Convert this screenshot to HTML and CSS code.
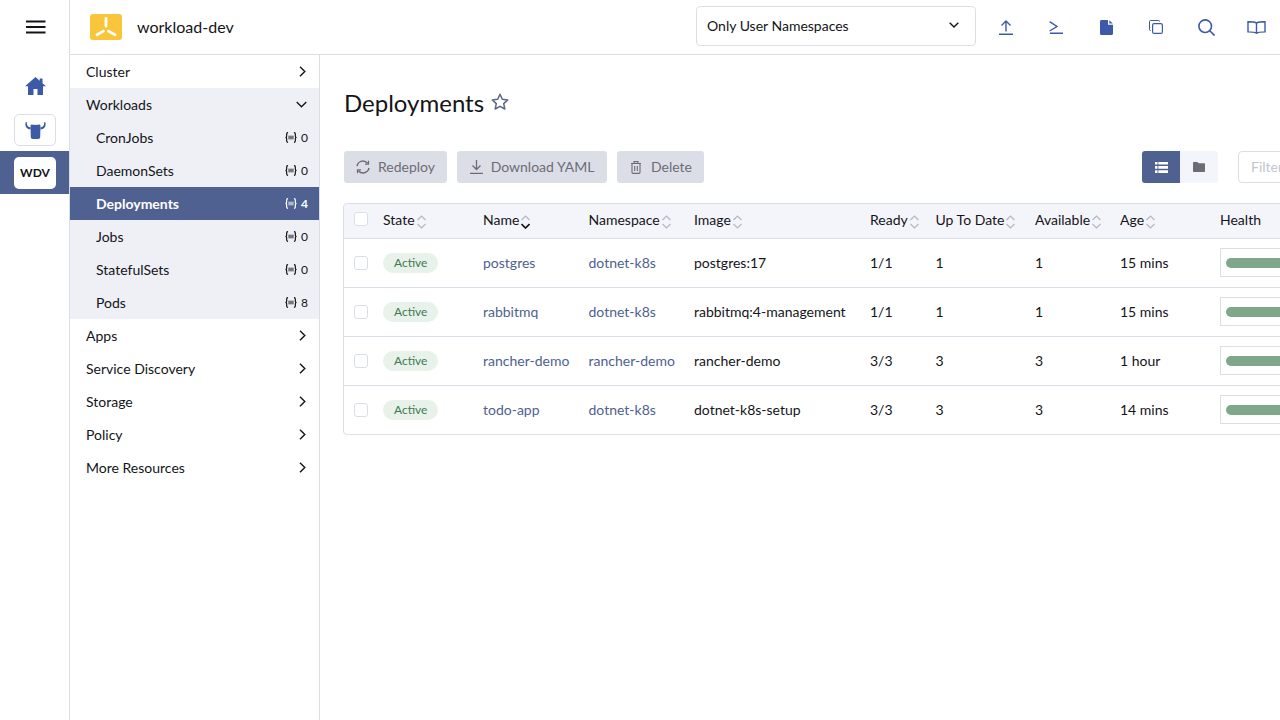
FILE: index.html
```html
<!DOCTYPE html>
<html lang="en">
<head>
  <meta charset="UTF-8">
  <title>Deployments</title>
  <link rel="stylesheet" href="styles.css">
</head>
<body>
  <svg class="sprite" width="0" height="0">
    <symbol id="count-icon" viewBox="0 0 11 10">
      <path d="M2.800.5C1.700.5 1.500 1 1.500 2v1.800C1.500 4.500 1.100 5 .4 5c.7 0 1.100.5 1.100 1.200V8c0 1 .2 1.500 1.300 1.500M8.200.5c1.100 0 1.300.5 1.300 1.500v1.800c0 .7.400 1.200 1.100 1.200-.7 0-1.100.5-1.100 1.200V8c0 1-.2 1.500-1.300 1.500" fill="none" stroke="currentColor" stroke-width="1.100"/>
      <rect x="3" y="3.300" width="5" height="3.400" fill="currentColor" fill-opacity=".55"/>
    </symbol>
    <symbol id="chev-right" viewBox="0 0 7 11">
      <path d="m1 .7 4.800 4.800L1 10.300" stroke="#141419" stroke-width="1.400" fill="none"/>
    </symbol>
  </svg>

  <div class="app">
    <aside class="rail">
      <div class="rail-menu">
        <svg width="20" height="14" viewBox="0 0 20 14"><path d="M0 1.500h19.500M0 7h19.500M0 12.500h19.500" stroke="#141419" stroke-width="2"/></svg>
      </div>
      <div class="rail-home">
        <svg width="21" height="18" viewBox="0 0 21 18"><path d="M10.500 0 0 9.300h3V18h5.500v-6h4v6H18V9.300h3L17.500 6.200V1.500h-2.800v2.200z" fill="#3d5aa8"/></svg>
      </div>
      <div class="rail-tile">
        <svg width="21" height="17" viewBox="0 0 21 17" fill="#3d5aa8"><path d="M7 2.500c1 .5 6 .5 7 0 1 0 1.500.6 1.500 1.500l-.3 11c-.1 1.200-.8 2-2 2H7.800c-1.200 0-1.900-.8-2-2L5.500 4C5.500 3.100 6 2.500 7 2.500z"/><path d="M.8 0C-.4 3.500.8 7 5.500 7.500V5.300C3 5 1.600 3.500 1.800 0zM20.200 0c1.200 3.500 0 7-4.700 7.500V5.300c2.500-.3 3.900-1.800 3.700-5.300z"/></svg>
      </div>
      <div class="rail-active">
        <div class="cluster-badge">WDV</div>
      </div>
    </aside>

    <div class="content">
      <header class="topbar">
        <div class="brand">
          <div class="brand-logo">
            <svg width="32" height="26" viewBox="0 0 32 26"><path d="M16 4.500v7.500M7 20.800l6.500-3.700M25 20.800l-6.500-3.700" stroke="#fff" stroke-width="2.800" stroke-linecap="round" fill="none"/></svg>
          </div>
          <span class="brand-name">workload-dev</span>
        </div>
        <div class="ns-select">
          <span>Only User Namespaces</span>
          <svg width="10" height="6" viewBox="0 0 10 6"><path d="M.7.700 5 5 9.300.7" stroke="#141419" stroke-width="1.400" fill="none"/></svg>
        </div>
        <div class="top-icons">
          <div class="top-icon"><svg width="14" height="15" viewBox="0 0 14 15"><path d="M7 11.500V1M2.500 5.500 7 1l4.500 4.500M0 14.200h14" stroke="#3d5aa8" stroke-width="1.400" fill="none"/></svg></div>
          <div class="top-icon"><svg width="14" height="13" viewBox="0 0 14 13"><path d="M.6.600 8 5.500.6 10M1 12.300h13" stroke="#3d5aa8" stroke-width="1.400" fill="none"/></svg></div>
          <div class="top-icon"><svg width="13" height="15" viewBox="0 0 13 15"><path d="M1.500 0H8v4.800h5v8.700c0 .9-.6 1.500-1.500 1.500h-10C.6 15 0 14.400 0 13.500v-12C0 .6.600 0 1.500 0zM9.300.2l3.500 3.400H9.300z" fill="#3d5aa8"/></svg></div>
          <div class="top-icon"><svg width="14" height="14" viewBox="0 0 14 14" fill="none" stroke="#3d5aa8"><rect x="3.600" y="3.600" width="9.800" height="9.800" rx="1.500" stroke-width="1.200"/><path d="M1.800 10.500h-.4c-.6 0-.9-.3-.9-.9V1.700C.5.900.9.500 1.700.5h7.900c.6 0 .9.300.9.900v.4" stroke-width="1"/></svg></div>
          <div class="top-icon"><svg width="17" height="17" viewBox="0 0 17 17" fill="none" stroke="#3d5aa8" stroke-width="1.600"><circle cx="7.200" cy="7.200" r="6.300"/><path d="m11.800 11.800 4.800 4.800"/></svg></div>
          <div class="top-icon"><svg width="19" height="13" viewBox="0 0 19 13" fill="none" stroke="#3d5aa8" stroke-width="1.400"><path d="M9.500 2C8 .9 6 .7 1 .7v10.200c5 0 7 .2 8.500 1.400 1.500-1.200 3.500-1.400 8.500-1.400V.7C13 .7 11 .9 9.500 2zM9.500 2v10"/></svg></div>
        </div>
      </header>

      <div class="body">
        <nav class="side-nav">
          <div class="nav-item">Cluster<svg class="chev" width="7" height="11"><use href="#chev-right"/></svg></div>
          <div class="nav-group">
            <div class="nav-item">Workloads<svg class="chev-down" width="11" height="7" viewBox="0 0 11 7"><path d="m.7 1 4.800 4.800L10.300 1" stroke="#141419" stroke-width="1.300" fill="none"/></svg></div>
            <div class="nav-sub">CronJobs<span class="count"><svg width="12" height="11"><use href="#count-icon"/></svg>0</span></div>
            <div class="nav-sub">DaemonSets<span class="count"><svg width="12" height="11"><use href="#count-icon"/></svg>0</span></div>
            <div class="nav-sub active">Deployments<span class="count"><svg width="12" height="11"><use href="#count-icon"/></svg>4</span></div>
            <div class="nav-sub">Jobs<span class="count"><svg width="12" height="11"><use href="#count-icon"/></svg>0</span></div>
            <div class="nav-sub">StatefulSets<span class="count"><svg width="12" height="11"><use href="#count-icon"/></svg>0</span></div>
            <div class="nav-sub">Pods<span class="count"><svg width="12" height="11"><use href="#count-icon"/></svg>8</span></div>
          </div>
          <div class="nav-item">Apps<svg class="chev" width="7" height="11"><use href="#chev-right"/></svg></div>
          <div class="nav-item">Service Discovery<svg class="chev" width="7" height="11"><use href="#chev-right"/></svg></div>
          <div class="nav-item">Storage<svg class="chev" width="7" height="11"><use href="#chev-right"/></svg></div>
          <div class="nav-item">Policy<svg class="chev" width="7" height="11"><use href="#chev-right"/></svg></div>
          <div class="nav-item">More Resources<svg class="chev" width="7" height="11"><use href="#chev-right"/></svg></div>
        </nav>

        <main class="main">
          <div class="title-row">
            <h1>Deployments</h1>
            <svg width="18" height="17" viewBox="0 0 18 17"><path d="m9 1.300 2.300 5 5.400.6-4 3.700 1.100 5.400L9 13.300 4.200 16l1.100-5.400-4-3.700 5.400-.6z" fill="none" stroke="#5c6784" stroke-width="1.500" stroke-linejoin="round"/></svg>
          </div>

          <div class="toolbar">
            <div class="actions">
              <button class="btn btn-redeploy">
                <svg width="14" height="14" viewBox="0 0 14 14" fill="none" stroke="#6c6c76" stroke-width="1.500"><path d="M1 6C1.500 3.200 4 1 7 1c2 0 3.500 1 4.600 2.300M13 8c-.5 2.800-3 5-6 5-2 0-3.500-1-4.600-2.300"/><path d="M12.500.8v3.400H9M1.500 13.200V9.800H5" stroke-width="1.200"/></svg>
                Redeploy
              </button>
              <button class="btn btn-download">
                <svg width="13" height="14" viewBox="0 0 13 14" fill="none" stroke="#6c6c76" stroke-width="1.300"><path d="M6.500 0v9.500M2.500 5.500l4 4 4-4M0 13.300h13"/></svg>
                Download YAML
              </button>
              <button class="btn btn-delete">
                <svg width="10" height="13" viewBox="0 0 10 13" fill="none" stroke="#6c6c76" stroke-width="1.100"><path d="M0 2.500h10M3 2.500V.6h4v1.900M1 2.500v8.700c0 .7.400 1.200 1 1.200h6c.6 0 1-.5 1-1.200V2.500M3.700 5v5M6.300 5v5"/></svg>
                Delete
              </button>
            </div>
            <div class="toolbar-right">
              <div class="view-toggle">
                <div class="view-btn on">
                  <svg width="13" height="11" viewBox="0 0 13 11" fill="#fff"><path d="M0 0h2.500v2.600H0zM3.300 0H13v2.600H3.300zM0 4.100h2.500v2.700H0zM3.300 4.100H13v2.700H3.300zM0 8.300h2.500V11H0zM3.300 8.300H13V11H3.300z"/></svg>
                </div>
                <div class="view-btn">
                  <svg width="12" height="10" viewBox="0 0 12 10" fill="#6c6c76"><path d="M1 0h3.500l1.200 1.300H11c.6 0 1 .4 1 1V9c0 .6-.4 1-1 1H1c-.6 0-1-.4-1-1V1c0-.6.400-1 1-1z"/></svg>
                </div>
              </div>
              <div class="filter">Filter</div>
            </div>
          </div>

          <table class="grid">
            <colgroup>
              <col class="col-check"><col class="col-state"><col class="col-name"><col class="col-ns"><col class="col-image"><col class="col-ready"><col class="col-date"><col class="col-avail"><col class="col-age"><col class="col-health">
            </colgroup>
            <thead>
              <tr>
                <th><span class="check head-check"></span></th>
                <th>State<svg class="sort" width="9" height="14" viewBox="0 0 9 14"><path class="sort-up" d="M.5 5 4.500 1l4 4"/><path class="sort-down" d="m.5 9 4 4 4-4"/></svg></th>
                <th class="sorted">Name<svg class="sort" width="9" height="14" viewBox="0 0 9 14"><path class="sort-up" d="M.5 5 4.500 1l4 4"/><path class="sort-down" d="m.5 9 4 4 4-4"/></svg></th>
                <th>Namespace<svg class="sort" width="9" height="14" viewBox="0 0 9 14"><path class="sort-up" d="M.5 5 4.500 1l4 4"/><path class="sort-down" d="m.5 9 4 4 4-4"/></svg></th>
                <th>Image<svg class="sort" width="9" height="14" viewBox="0 0 9 14"><path class="sort-up" d="M.5 5 4.500 1l4 4"/><path class="sort-down" d="m.5 9 4 4 4-4"/></svg></th>
                <th>Ready<svg class="sort" width="9" height="14" viewBox="0 0 9 14"><path class="sort-up" d="M.5 5 4.500 1l4 4"/><path class="sort-down" d="m.5 9 4 4 4-4"/></svg></th>
                <th>Up To Date<svg class="sort" width="9" height="14" viewBox="0 0 9 14"><path class="sort-up" d="M.5 5 4.500 1l4 4"/><path class="sort-down" d="m.5 9 4 4 4-4"/></svg></th>
                <th>Available<svg class="sort" width="9" height="14" viewBox="0 0 9 14"><path class="sort-up" d="M.5 5 4.500 1l4 4"/><path class="sort-down" d="m.5 9 4 4 4-4"/></svg></th>
                <th>Age<svg class="sort" width="9" height="14" viewBox="0 0 9 14"><path class="sort-up" d="M.5 5 4.500 1l4 4"/><path class="sort-down" d="m.5 9 4 4 4-4"/></svg></th>
                <th class="plain">Health</th>
              </tr>
            </thead>
            <tbody>
              <tr>
                <td><span class="check"></span></td>
                <td><span class="badge">Active</span></td>
                <td><a class="link">postgres</a></td>
                <td><a class="link">dotnet-k8s</a></td>
                <td>postgres:17</td>
                <td>1/1</td>
                <td>1</td>
                <td>1</td>
                <td>15 mins</td>
                <td><div class="health"><div class="health-bar"></div></div></td>
              </tr>
              <tr>
                <td><span class="check"></span></td>
                <td><span class="badge">Active</span></td>
                <td><a class="link">rabbitmq</a></td>
                <td><a class="link">dotnet-k8s</a></td>
                <td>rabbitmq:4-management</td>
                <td>1/1</td>
                <td>1</td>
                <td>1</td>
                <td>15 mins</td>
                <td><div class="health"><div class="health-bar"></div></div></td>
              </tr>
              <tr>
                <td><span class="check"></span></td>
                <td><span class="badge">Active</span></td>
                <td><a class="link">rancher-demo</a></td>
                <td><a class="link">rancher-demo</a></td>
                <td>rancher-demo</td>
                <td>3/3</td>
                <td>3</td>
                <td>3</td>
                <td>1 hour</td>
                <td><div class="health"><div class="health-bar"></div></div></td>
              </tr>
              <tr>
                <td><span class="check"></span></td>
                <td><span class="badge">Active</span></td>
                <td><a class="link">todo-app</a></td>
                <td><a class="link">dotnet-k8s</a></td>
                <td>dotnet-k8s-setup</td>
                <td>3/3</td>
                <td>3</td>
                <td>3</td>
                <td>14 mins</td>
                <td><div class="health"><div class="health-bar"></div></div></td>
              </tr>
            </tbody>
          </table>
        </main>
      </div>
    </div>
  </div>
</body>
</html>
```

FILE: styles.css
```css
/* base */
html, body {
  margin: 0;
  height: 100%;
  overflow: hidden;
}

body {
  font-family: 'Lato', 'Liberation Sans', sans-serif;
  font-size: 14px;
  color: #141419;
  background-color: #fff;
}

svg {
  display: block;
  flex: none;
}

svg.sprite {
  display: none;
}

.app {
  display: flex;
  height: 720px;
}

/* left rail */
.rail {
  width: 69px;
  flex: none;
  border-right: 1px solid #dcdee7;
  display: flex;
  flex-direction: column;
  align-items: center;
  box-sizing: content-box;
}

.rail-menu {
  height: 54px;
  display: flex;
  align-items: center;
  justify-content: center;
  padding-left: 2px;
}

.rail-home {
  height: 60px;
  display: flex;
  align-items: center;
  justify-content: center;
  box-sizing: border-box;
  padding: 4px 0 0 1px;
}

.rail-tile {
  width: 42px;
  height: 32px;
  box-sizing: border-box;
  border: 1px solid #dcdee7;
  border-radius: 5px;
  display: flex;
  align-items: center;
  justify-content: center;
  margin-left: 1px;
}

.rail-active {
  width: 100%;
  height: 43px;
  margin-top: 5px;
  background-color: #4f6190;
  display: flex;
  align-items: center;
  justify-content: center;
  padding-left: 1px;
  box-sizing: border-box;
}

.cluster-badge {
  width: 42px;
  height: 32px;
  border-radius: 5px;
  background-color: #fff;
  font-size: 12px;
  font-weight: 700;
  line-height: 32px;
  text-align: center;
}

.content {
  flex: 1;
  min-width: 0;
  display: flex;
  flex-direction: column;
}

/* top bar */
.topbar {
  height: 54px;
  flex: none;
  border-bottom: 1px solid #dcdee7;
  display: flex;
  align-items: center;
}

.brand {
  display: flex;
  align-items: center;
  gap: 15px;
  padding-left: 20px;
  width: 626px;
  flex: none;
  box-sizing: border-box;
}

.brand-logo {
  width: 32px;
  height: 26px;
  border-radius: 3px;
  background-color: #f9c53b;
}

.brand-name {
  font-size: 16px;
  margin-top: -1px;
}

.ns-select {
  width: 280px;
  flex: none;
  height: 40px;
  box-sizing: border-box;
  border: 1px solid #dcdee7;
  border-radius: 4px;
  padding: 0 16px 2px 10px;
  margin-top: -2px;
  display: flex;
  align-items: center;
  justify-content: space-between;
}

.top-icons {
  display: flex;
  margin-left: 5px;
}

.top-icon {
  width: 50px;
  height: 20px;
  display: flex;
  align-items: center;
  justify-content: center;
}

.body {
  flex: 1;
  display: flex;
  min-height: 0;
}

/* side nav */
.side-nav {
  width: 249px;
  flex: none;
  border-right: 1px solid #dcdee7;
}

.nav-item,
.nav-sub {
  height: 33px;
  display: flex;
  align-items: center;
  justify-content: space-between;
  padding: 0 13px 0 16px;
}

.chev-down {
  margin-right: -1px;
}

.nav-group {
  background-color: #eef0f5;
}

.nav-sub {
  padding: 0 11px 0 26px;
}

.nav-sub.active {
  background-color: #4f6190;
  color: #fff;
  font-weight: 700;
}

.count {
  display: flex;
  align-items: center;
  gap: 4px;
  font-size: 12px;
  font-weight: 400;
  color: #141419;
}

.nav-sub.active .count {
  font-weight: 700;
  color: #fff;
}

/* main area */
.main {
  flex: 1;
  min-width: 0;
  padding: 23px 0 0 24px;
  overflow: hidden;
}

.title-row {
  display: flex;
  align-items: center;
  gap: 7px;
  height: 48px;
}

h1 {
  margin: 0;
  font-size: 24px;
  font-weight: 400;
}

.title-row svg {
  margin-top: -2px;
}

.toolbar {
  margin-top: 25px;
  width: 960px;
  display: flex;
  justify-content: space-between;
}

.actions {
  display: flex;
  gap: 10px;
}

.btn {
  height: 32px;
  border: none;
  border-radius: 3px;
  background-color: #dcdee7;
  color: #6c6c76;
  font-family: inherit;
  font-size: 14px;
  padding: 0 0 2px;
  display: flex;
  align-items: center;
  justify-content: center;
  gap: 8px;
}

.btn svg {
  margin-top: 2px;
}

.btn-redeploy { width: 103px; }
.btn-download { width: 150px; }
.btn-delete { width: 87px; gap: 10px; padding-left: 2px; }

.toolbar-right {
  display: flex;
  gap: 20px;
}

.view-toggle {
  display: flex;
  border-radius: 3px;
  overflow: hidden;
}

.view-btn {
  width: 38px;
  height: 32px;
  background-color: #f4f5fa;
  display: flex;
  align-items: center;
  justify-content: center;
}

.view-btn.on {
  background-color: #4f6190;
}

.filter {
  width: 120px;
  height: 32px;
  flex: none;
  box-sizing: border-box;
  border: 1px solid #dcdee7;
  border-radius: 4px;
  padding-left: 12px;
  line-height: 30px;
  color: #c4c5d0;
  margin-right: -54px;
}

/* table */
.grid {
  margin: 20px 0 0 -1px;
  width: 1100px;
  table-layout: fixed;
  border-collapse: separate;
  border-spacing: 0;
  border: 1px solid #dcdee7;
  border-radius: 4px;
}

.col-check { width: 39px; }
.col-state { width: 100px; }
.col-name { width: 105.5px; }
.col-ns { width: 105.5px; }
.col-image { width: 176px; }
.col-ready { width: 65.5px; }
.col-date { width: 99.500px; }
.col-avail { width: 85px; }
.col-age { width: 100px; }
.col-health { width: 224px; }

th {
  height: 32px;
  padding: 0 0 2px;
  background-color: #f4f5fa;
  border-bottom: 1px solid #dcdee7;
  font-weight: 400;
  text-align: left;
  white-space: nowrap;
}

th.plain {
  height: 30px;
  padding-bottom: 4px;
}

th:first-child {
  border-top-left-radius: 4px;
}

td {
  height: 46px;
  padding: 0 0 2px;
  border-bottom: 1px solid #dcdee7;
  white-space: nowrap;
}

tr:last-child td {
  border-bottom: none;
}

.check {
  display: block;
  width: 14px;
  height: 14px;
  box-sizing: border-box;
  margin-left: 10px;
  border: 1px solid #dcdee7;
  border-radius: 3px;
  background-color: #fff;
}

td .check,
td .badge {
  margin-top: 2px;
}

.head-check {
  margin-top: -3px;
}

.sort {
  display: inline-block;
  margin-left: 2px;
  vertical-align: -4px;
  fill: none;
  stroke: #b6b7c4;
  stroke-width: 1.200;
}

.sorted .sort-down {
  stroke: #141419;
  stroke-width: 1.700;
}

.badge {
  display: inline-block;
  height: 20px;
  line-height: 20px;
  padding: 0 11px;
  border-radius: 10px;
  background-color: #e8f2ea;
  color: #3d7a52;
  font-size: 12px;
}

.link {
  color: #4f6190;
}

.health {
  width: 200px;
  height: 29px;
  box-sizing: border-box;
  border: 1px solid #dcdee7;
  padding: 9px 5px;
}

.health-bar {
  height: 10px;
  border-radius: 5px;
  background-color: #7fa88b;
}
```
